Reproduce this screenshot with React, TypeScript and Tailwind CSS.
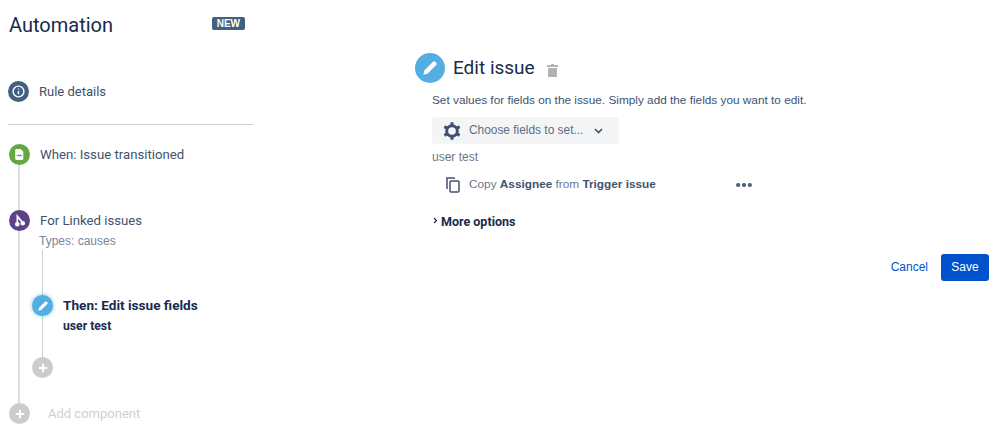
import { Ellipsis, Plus } from "lucide-react";

const sans = "font-['Roboto',sans-serif]";
const arial = "font-['Liberation_Sans',Arial,sans-serif]";

function Pencil({ size }: { size: number }) {
  return (
    <svg width={size} height={size} viewBox="0 0 24 24" fill="white">
      <path d="M4 20l1.2-5L15.6 4.6a2 2 0 0 1 2.8 0l1 1a2 2 0 0 1 0 2.8L9 18.8z" />
    </svg>
  );
}

function Gear() {
  return (
    <svg width="20" height="20" viewBox="0 0 24 24" fill="none" stroke="#42526e" strokeWidth="3.6">
      <circle cx="12" cy="12" r="6.4" />
      <path d="M12 1.5v3.6M12 18.9v3.6M2.9 6.7l3.1 1.8M18 15.5l3.1 1.8M2.9 17.3l3.1-1.8M18 8.5l3.1-1.8" />
    </svg>
  );
}

function Step({ color, children }: { color: string; children: React.ReactNode }) {
  return (
    <div className={`relative z-10 flex h-[21px] w-[21px] shrink-0 items-center justify-center rounded-full ${color}`}>
      {children}
    </div>
  );
}

export default function App() {
  return (
    <div className={`flex h-[432px] w-[998px] overflow-hidden bg-white ${sans}`}>
      {/* Sidebar */}
      <aside className="relative ml-2 w-[245px] shrink-0">
        <div className="flex h-[50px] items-center justify-between">
          <h1 className="ml-px text-[20px] leading-none text-[#172b4d]">Automation</h1>
          <span className={`mb-[4px] mr-2 rounded-[2px] bg-[#42607f] px-[5px] py-px text-[10px] font-bold leading-[11px] text-white ${arial}`}>NEW</span>
        </div>

        <div className="mt-[31px] flex items-center gap-[10px]">
          <Step color="bg-[#42607f]">
            <svg width="13" height="13" viewBox="0 0 24 24" fill="none" stroke="white" strokeWidth="2.6">
              <circle cx="12" cy="12" r="10" />
              <path d="M12 11v6M12 6.5v2" />
            </svg>
          </Step>
          <span className="text-[13px] text-[#42526e]">Rule details</span>
        </div>

        <div className="mt-[22px] h-px bg-[#d0d0d0]" />

        {/* Timeline */}
        <div className="relative ml-px mt-[19px]">
          <div className="absolute left-[9px] top-[10px] h-[250px] w-[2px] bg-[#dfdfdf]" />

          <div className="flex items-center gap-[10px]">
            <Step color="bg-[#64a844]">
              <svg width="13" height="13" viewBox="0 0 24 24" fill="white">
                <path d="M6 2h8l5 5v13a2 2 0 0 1-2 2H6a2 2 0 0 1-2-2V4a2 2 0 0 1 2-2z" />
                <path d="M7 15l2.5-2 2.5 2 2-2 2.5 2" fill="none" stroke="#64a844" strokeWidth="2" />
              </svg>
            </Step>
            <span className="text-[13.2px] text-[#42526e]">When: Issue transitioned</span>
          </div>

          <div className="mt-[45px] flex items-center gap-[10px]">
            <Step color="bg-[#5e4287]">
              <svg width="13" height="13" viewBox="0 0 24 24" fill="none" stroke="white" strokeWidth="3">
                <path d="M8 19V4l9 11" />
                <circle cx="8" cy="19" r="2.8" fill="white" />
                <circle cx="18" cy="17" r="2.8" fill="white" />
              </svg>
            </Step>
            <span className="text-[13.2px] text-[#42526e]">For Linked issues</span>
          </div>
          <p className={`ml-[30px] mt-[1px] text-[12px] leading-[18px] text-[#7a869a] ${arial}`}>Types: causes</p>

          {/* Nested branch */}
          <div className="relative ml-[23px] mt-[45px]">
            <div className="absolute left-[10px] top-[-45px] h-[107px] w-px bg-[#d0d0d0]" />
            <div className="flex items-center gap-[10px]">
              <Step color="bg-[#53aee2] shadow-[0_0_4px_#7cc4ee]">
                <Pencil size={14} />
              </Step>
              <span className="text-[13.6px] font-bold text-[#172b4d]">Then: Edit issue fields</span>
            </div>
            <p className="ml-[31px] mt-[1px] text-[12.2px] font-bold leading-[18px] text-[#172b4d]">user test</p>
            <div className="mt-[22px]">
              <Step color="bg-[#cccccc]">
                <Plus size={12} strokeWidth={4} color="white" />
              </Step>
            </div>
          </div>

          <div className="mt-[25px] flex items-center gap-[18px]">
            <Step color="bg-[#cccccc]">
              <Plus size={12} strokeWidth={4} color="white" />
            </Step>
            <span className="text-[13px] text-[#cfcfcf]">Add component</span>
          </div>
        </div>
      </aside>

      {/* Editor */}
      <main className="ml-[162px] w-[574px] shrink-0 pt-[53px]">
        <div className="flex items-center">
          <div className="flex h-[30px] w-[30px] items-center justify-center rounded-full bg-[#53aee2]">
            <Pencil size={20} />
          </div>
          <h2 className="ml-2 text-[19px] leading-[30px] text-[#172b4d]">Edit issue</h2>
          <svg width="11" height="13" viewBox="0 0 11 13" fill="#b3b3b3" className="ml-[12px] mt-1">
            <path d="M4 0h3v1h4v2H0V1h4zM1 4h9v8a1 1 0 0 1-1 1H2a1 1 0 0 1-1-1z" />
          </svg>
        </div>

        <div className={`ml-[17px] ${arial}`}>
          <p className="mt-[9px] text-[11.8px] leading-[16px] text-[#42526e]">
            Set values for fields on the issue. Simply add the fields you want to edit.
          </p>
          <button className="mt-[9px] flex h-[27px] w-[187px] items-center rounded-[3px] bg-[#f4f5f7] pl-[10px] text-[11.9px] text-[#5e6c84]">
            <Gear />
            <span className="ml-[7px]">Choose fields to set...</span>
            <svg width="9" height="6" viewBox="0 0 9 6" fill="none" stroke="#42526e" strokeWidth="1.6" className="ml-[11px]">
              <path d="M1 1l3.5 3.5L8 1" />
            </svg>
          </button>
          <p className="mt-[5px] text-[12px] leading-[16px] text-[#6b778c]">user test</p>

          <div className="mt-[10px] flex h-[19px] items-center">
            <svg width="14" height="16" viewBox="0 0 14 16" fill="none" stroke="#42526e" strokeWidth="1.5" className="ml-[14px]">
              <path d="M1 12V1h8" />
              <rect x="4" y="4" width="9" height="11" rx="1" />
            </svg>
            <span className="ml-[9px] w-[265px] text-[11.8px] text-[#6b778c]">
              Copy <b className="text-[#42526e]">Assignee</b> from <b className="text-[#42526e]">Trigger issue</b>
            </span>
            <Ellipsis size={20} strokeWidth={3} color="#42526e" />
          </div>

          <div className={`mt-[19px] flex items-center text-[12.5px] font-bold text-[#172b4d] ${sans}`}>
            <svg width="5" height="7" viewBox="0 0 5 7" fill="none" stroke="#172b4d" strokeWidth="1.2" className="ml-px mb-1">
              <path d="M1 1l2.5 2.5L1 6" />
            </svg>
            <span className="ml-[3px]">More options</span>
          </div>
        </div>

        <div className={`mt-[22px] flex items-center justify-end gap-[13px] text-[12px] ${arial}`}>
          <span className="text-[#0052cc]">Cancel</span>
          <button className="h-[27px] w-[48px] rounded-[3px] bg-[#0052cc] text-white">Save</button>
        </div>
      </main>
    </div>
  );
}
